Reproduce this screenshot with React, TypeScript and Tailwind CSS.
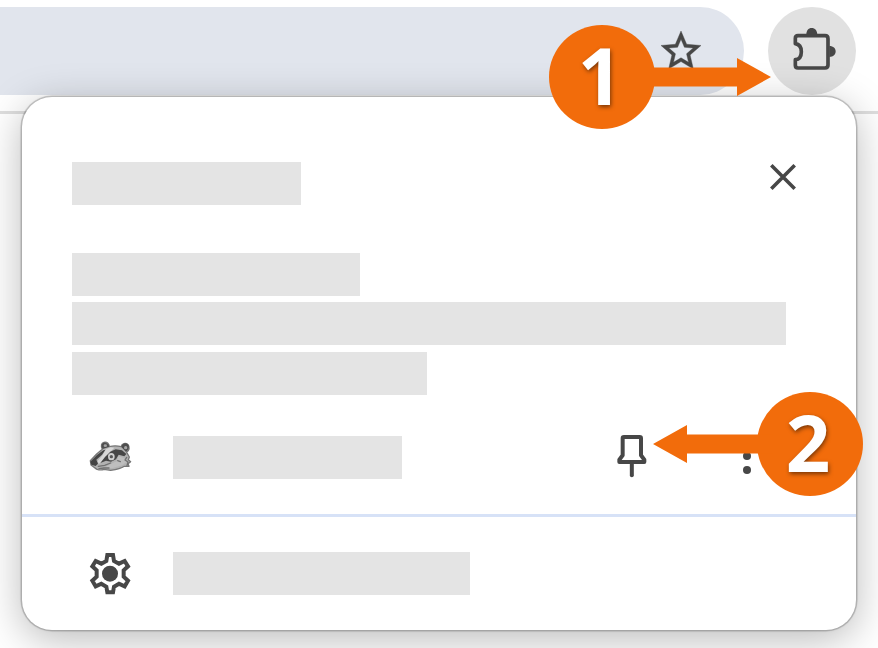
import React from "react";

const INK = "#474747";

function Placeholder({ className }: { className: string }) {
  return <div className={`h-[43px] shrink-0 bg-[#e4e4e4] ${className}`} />;
}

function StarIcon() {
  return (
    <svg className="h-[48px] w-[48px]" viewBox="0 0 24 24" fill={INK} stroke={INK} strokeWidth="0.2">
      <path d="M22 9.24l-7.19-.62L12 2 9.19 8.63 2 9.24l5.46 4.73L5.82 21 12 17.27 18.18 21l-1.63-7.03L22 9.24zM12 15.4l-3.76 2.27 1-4.28-3.32-2.88 4.38-.38L12 6.1l1.71 4.04 4.38.38-3.32 2.88 1 4.28L12 15.4z" />
    </svg>
  );
}

function PuzzleIcon() {
  return (
    <svg className="h-[60px] w-[60px]" viewBox="0 0 180 180" fill="none">
      <path
        d="M39 47 H120 Q129 47 129 56 V135 Q129 144 120 144 H39 Q31 144 31 136 V119 C43 118 49 108 49 95 C49 82 43 73 31 71 V55 Q31 47 39 47 Z"
        stroke={INK}
        strokeWidth="11"
        strokeLinejoin="round"
      />
      <path d="M64 44 C64 32 70 24 80 24 C90 24 97 32 97 44 Z M133 78 C145 78 152 85 152 94 C152 104 145 111 133 111 Z" fill={INK} />
    </svg>
  );
}

function CloseIcon() {
  return (
    <svg className="h-[28px] w-[28px]" viewBox="0 0 28 28" fill="none" stroke={INK} strokeWidth="3.6">
      <path d="M2.3 2.3 L25.7 25.7 M25.7 2.3 L2.3 25.7" />
    </svg>
  );
}

function BadgerIcon() {
  return (
    <svg className="h-[55px] w-[60px] shrink-0" viewBox="0 0 180 165" fill="none" strokeLinecap="round" strokeLinejoin="round">
      <path
        d="M31 92 L50 72 L67 58 C62 47 64 39 72 37 C81 35 87 41 88 50 C101 46 113 47 124 50 C125 40 137 37 144 44 C151 52 147 61 140 67 L148 81 L145 89 L152 95 L144 101 L147 109 L133 109 C122 117 108 119 92 121 L72 118 C62 122 50 119 44 113 L33 105 Z"
        fill="#b2b2b2"
        stroke="#777"
        strokeWidth="4"
      />
      <path d="M68 57 C61 45 68 36 77 38 C84 40 88 44 87 51 Z M124 51 C127 38 141 37 146 46 C149 54 144 61 138 66 Z" fill="#4f4f4f" />
      <ellipse cx="76" cy="47" rx="5" ry="4" fill="#a6a6a6" />
      <ellipse cx="137" cy="53" rx="5" ry="5" fill="#a6a6a6" />
      <path d="M31 95 L51 75 L70 61 L76 60 L66 74 L49 89 L54 101 L47 108 L34 104 Z" fill="#444" />
      <path d="M53 93 L68 75 L78 58 L91 52 L103 53 L91 65 L76 82 L67 94 L56 102 Z" fill="#d8d8d8" />
      <path d="M61 99 L75 81 L91 65 L107 58 L126 61 L139 72 L133 79 L116 74 L108 88 L93 95 L78 92 Z" fill="#464646" />
      <ellipse cx="94" cy="80" rx="10" ry="11" fill="#cfcfcf" />
      <circle cx="94" cy="80" r="5" fill="#555" />
      <path d="M115 79 L132 84 L142 94 L128 105 L96 115 L76 112 L93 101 L111 94 Z" fill="#bebebe" />
      <path d="M55 109 L74 106 L92 99 M57 116 L72 114 L87 114 M113 92 L121 95 M140 82 L135 90 L144 96 L141 107" stroke="#717171" strokeWidth="4" />
    </svg>
  );
}

function PinIcon() {
  return (
    <svg className="h-[46px] w-[34px]" viewBox="0 0 102 138" fill="none" stroke={INK}>
      <path d="M27 9 H74 Q78 9 78 13 V64 L88 77 V84 H13 V77 L23 64 V13 Q23 9 27 9 Z" strokeWidth="12" strokeLinejoin="round" />
      <path d="M50.5 85 V124" strokeWidth="12" strokeLinecap="round" />
    </svg>
  );
}

function GearIcon() {
  return (
    <svg className="h-[60px] w-[60px] shrink-0" viewBox="0 0 180 180" fill="none">
      <path
        d="M82 30 H99 L102 48 L117 56 L134 48 L144 64 L131 76 V95 L144 107 L134 124 L117 116 L102 125 L99 142 H82 L79 125 L64 116 L47 124 L37 107 L50 95 V76 L37 64 L47 48 L64 56 L79 48 Z"
        stroke={INK}
        strokeWidth="12"
      />
      <circle cx="90" cy="86" r="24" fill={INK} />
    </svg>
  );
}

function Callout({ label, side }: { label: string; side: "right" | "left" }) {
  const arrow = (
    <svg
      className={`h-[38px] w-[120px] shrink-0 ${side === "right" ? "-ml-[4px]" : "-mr-[16px] rotate-180"}`}
      viewBox="0 0 120 38"
      fill="#f26c0b"
    >
      <path d="M0 9.5 H86 V0 L120 19 L86 38 V28.5 H0 Z" />
    </svg>
  );
  return (
    <div className="flex items-center">
      {side === "left" && arrow}
      <div className="flex h-[104px] w-[106px] shrink-0 items-center justify-center rounded-[50%] bg-[#f26c0b] pr-[4px] pb-[4px]">
        <span className="font-['Open_Sans',sans-serif] text-[78px] leading-[100px] font-bold text-white [text-shadow:1px_2px_4px_rgba(0,0,0,0.5)]">
          {label}
        </span>
      </div>
      {side === "right" && arrow}
    </div>
  );
}

export default function App() {
  return (
    <div className="relative h-[648px] w-[878px] overflow-hidden bg-white">
      <header className="flex h-[114px] items-start border-b-[3px] border-[#dedede] pt-[7px]">
        <div className="flex h-[88px] w-[744px] items-center justify-end rounded-r-full bg-[#e1e5ed] pr-[39px]">
          <StarIcon />
        </div>
        <div className="ml-6 flex h-[88px] w-[88px] items-center justify-center rounded-full bg-[#e1e1e1] pb-[2px] pl-[6px]">
          <PuzzleIcon />
        </div>
      </header>

      <section className="absolute top-[97px] left-[22px] flex h-[533px] w-[834px] flex-col rounded-[30px] bg-white shadow-[0_0_0_1.5px_rgba(0,0,0,0.15),0_0_3px_rgba(0,0,0,0.22),0_9px_42px_rgba(0,0,0,0.28)]">
        <div className="flex justify-between pt-[65px] pr-[59px] pl-[50px]">
          <Placeholder className="w-[229px]" />
          <div className="pt-px"><CloseIcon /></div>
        </div>
        <div className="mt-12 flex flex-col gap-[6.4px] pl-[50px]">
          <Placeholder className="w-[288px]" />
          <Placeholder className="w-[714px]" />
          <Placeholder className="w-[355px]" />
        </div>
        <div className="mt-[35.2px] flex h-[55px] pl-[58px]">
          <BadgerIcon />
          <Placeholder className="mt-[6px] ml-[33px] w-[229px]" />
          <div className="mt-[4px] ml-[213px]"><PinIcon /></div>
          <div className="mt-[8px] ml-[93.5px] flex flex-col gap-[6px]">
            <div className="h-2 w-2 rounded-full bg-[#474747]" />
            <div className="h-2 w-2 rounded-full bg-[#474747]" />
            <div className="h-2 w-2 rounded-full bg-[#474747]" />
          </div>
        </div>
        <div className="mt-[29px] h-[3px] bg-[#d7e2f7]" />
        <div className="mt-[28px] flex pl-[58px]">
          <GearIcon />
          <Placeholder className="mt-[7px] ml-[33px] w-[297px]" />
        </div>
      </section>

      <div className="absolute top-[25px] left-[549px]">
        <Callout label="1" side="right" />
      </div>
      <div className="absolute top-[392px] left-[653px]">
        <Callout label="2" side="left" />
      </div>
    </div>
  );
}
